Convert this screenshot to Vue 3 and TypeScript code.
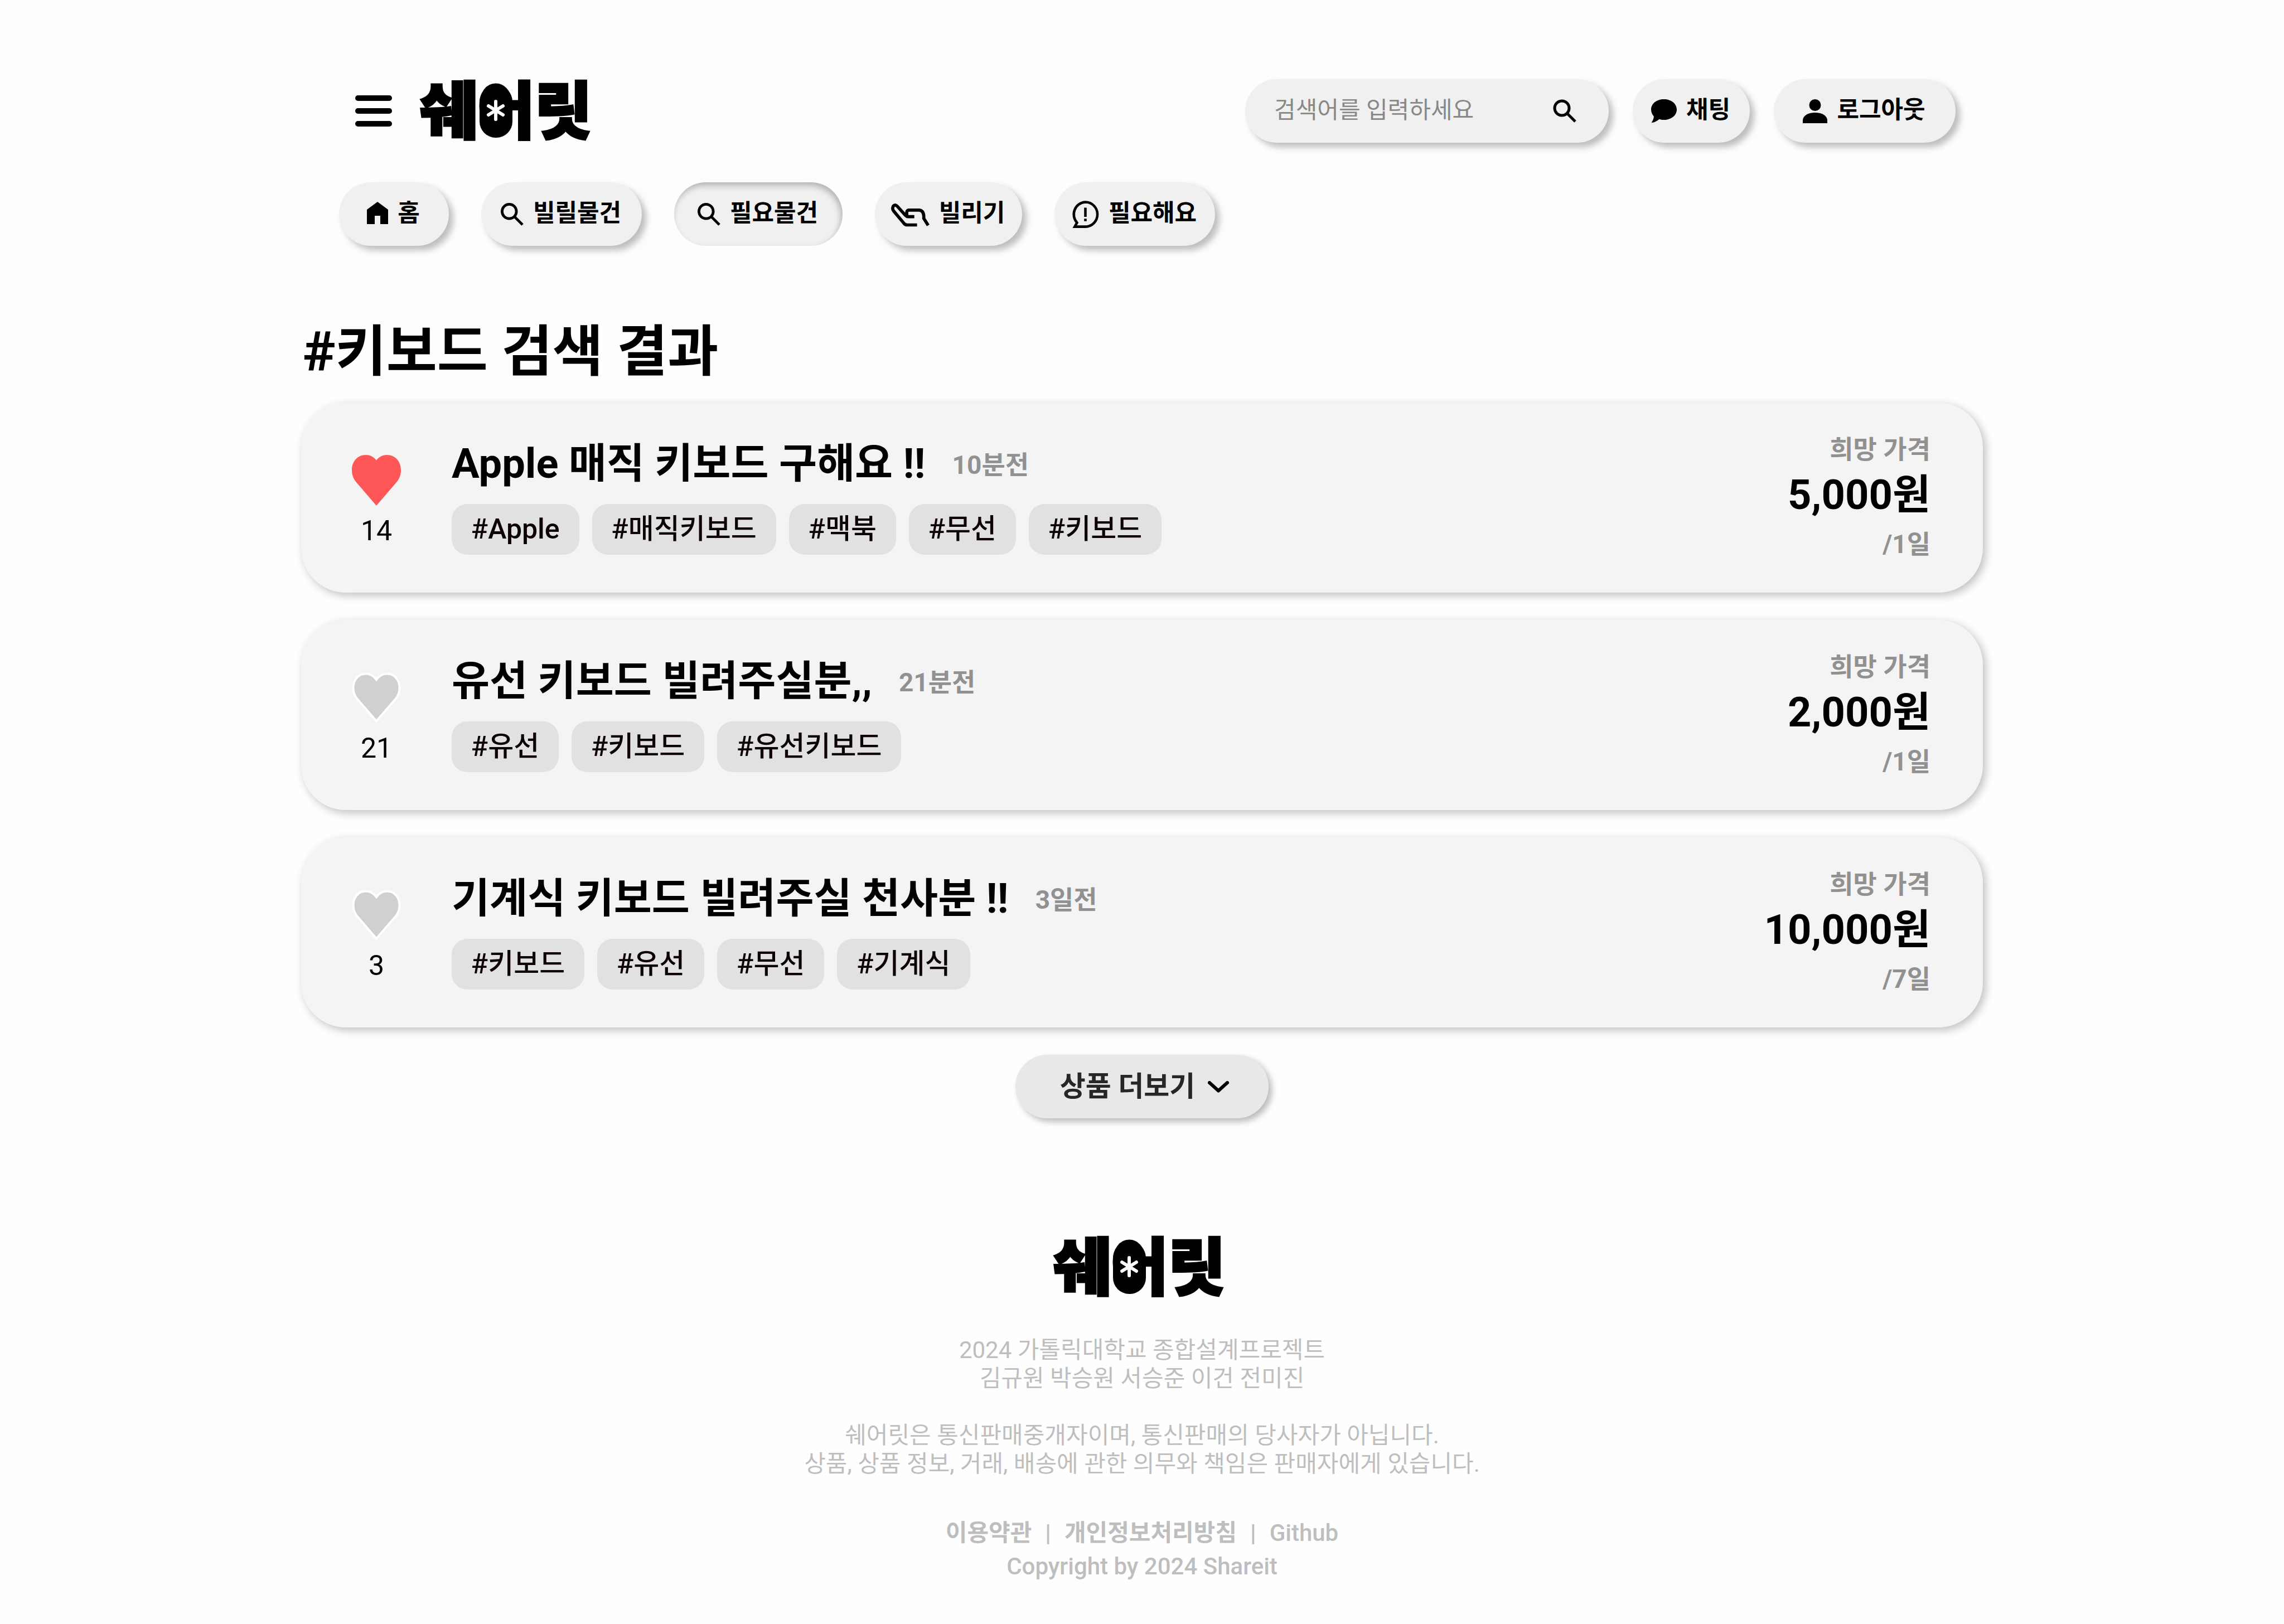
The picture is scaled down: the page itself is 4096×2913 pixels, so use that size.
<script setup lang="ts">
import { ref } from 'vue'

interface NavItem {
  id: string
  label: string
  icon: 'home' | 'search' | 'hand' | 'notice'
}

interface Post {
  id: number
  title: string
  time: string
  tags: string[]
  likes: number
  liked: boolean
  price: string
  period: string
}

const navItems: NavItem[] = [
  { id: 'home', label: '홈', icon: 'home' },
  { id: 'lend', label: '빌릴물건', icon: 'search' },
  { id: 'need', label: '필요물건', icon: 'search' },
  { id: 'borrow', label: '빌리기', icon: 'hand' },
  { id: 'request', label: '필요해요', icon: 'notice' },
]

const activeNav = ref('need')
const keyword = ref('')

const posts = ref<Post[]>([
  {
    id: 1,
    title: 'Apple 매직 키보드 구해요 !!',
    time: '10분전',
    tags: ['Apple', '매직키보드', '맥북', '무선', '키보드'],
    likes: 14,
    liked: true,
    price: '5,000원',
    period: '/1일',
  },
  {
    id: 2,
    title: '유선 키보드 빌려주실분,,',
    time: '21분전',
    tags: ['유선', '키보드', '유선키보드'],
    likes: 21,
    liked: false,
    price: '2,000원',
    period: '/1일',
  },
  {
    id: 3,
    title: '기계식 키보드 빌려주실 천사분 !!',
    time: '3일전',
    tags: ['키보드', '유선', '무선', '기계식'],
    likes: 3,
    liked: false,
    price: '10,000원',
    period: '/7일',
  },
])

function toggleLike(post: Post) {
  post.likes += post.liked ? -1 : 1
  post.liked = !post.liked
}
</script>

<template>
  <div class="page">
    <header class="header">
      <div class="container header-inner">
        <div class="top-row">
          <button class="menu" type="button" aria-label="메뉴">
            <span></span><span></span><span></span>
          </button>
          <a class="logo" href="#" aria-label="쉐어릿">
            <svg class="logo-art" viewBox="0 0 306 98">
              <text class="logo-text" x="0" y="90">쉐어릿</text>
              <rect x="107" y="3" width="59" height="94" rx="29" />
              <path class="spark" d="M136 32V64M123 40L149 56M149 40L123 56" />
            </svg>
          </a>
          <form class="search" role="search" @submit.prevent>
            <input v-model="keyword" type="text" aria-label="검색어" placeholder="검색어를 입력하세요" />
            <button class="search-go" type="submit" aria-label="검색">
              <svg viewBox="0 0 43 43"><circle cx="16" cy="16" r="13" /><path d="M25 25L40 40" /></svg>
            </button>
          </form>
          <button class="pill chat" type="button">
            <svg class="solid" width="46" height="42" viewBox="0 0 46 42">
              <path d="M23 0C36 0 46 8 46 18.500C46 29 36 37 23 37C20 37 17 36.600 14.500 35.800C11 39 6 42 0.500 42C3 39 4.500 35 5 31C2 27.500 0 23.500 0 18.500C0 8 10 0 23 0Z" />
            </svg>
            <span>채팅</span>
          </button>
          <button class="pill logout" type="button">
            <svg class="solid" width="44" height="43" viewBox="0 0 44 43">
              <circle cx="22" cy="10.500" r="10.500" />
              <path d="M0 43V38C0 30 9 24 22 24C35 24 44 30 44 38V43Z" />
            </svg>
            <span>로그아웃</span>
          </button>
        </div>
        <nav class="nav-row">
          <button
            v-for="item in navItems"
            :key="item.id"
            type="button"
            class="pill"
            :class="[item.id, { active: item.id === activeNav }]"
            @click="activeNav = item.id"
          >
            <svg v-if="item.icon === 'home'" class="solid" width="38" height="44" viewBox="0 0 38 44">
              <path d="M19 0L38 14V40H24V25H14V40H0V14Z" />
            </svg>
            <svg v-else-if="item.icon === 'search'" class="line" width="41" height="41" viewBox="0 0 43 43">
              <circle cx="16" cy="16" r="13.500" />
              <path d="M25 25L41 41" />
            </svg>
            <svg v-else-if="item.icon === 'hand'" class="hand" width="69" height="42" viewBox="32 40 280 170">
              <path d="M221 204H150Q136 204 127 194L52 104Q38 87 48 67Q61 52 76 67L136 134Q145 144 155 144H201" />
              <path d="M147 134Q140 96 163 96H235Q267 98 270 138V156L302 207" />
            </svg>
            <svg v-else class="notice" width="49" height="49" viewBox="1349 23 200 205">
              <path d="M1449 33.500A90 92 0 0 1 1449 218H1369L1386 188A90 92 0 0 1 1449 33.500Z" />
              <path d="M1449 75V144M1449 158V177" />
            </svg>
            <span>{{ item.label }}</span>
          </button>
        </nav>
      </div>
    </header>

    <main class="container">
      <h1>#키보드 검색 결과</h1>
      <ul class="posts">
        <li v-for="post in posts" :key="post.id" class="card">
          <button class="like" :class="{ liked: post.liked }" type="button" :aria-pressed="post.liked" @click="toggleLike(post)">
            <svg viewBox="0 0 88 91">
              <path v-if="post.liked" d="M44 9.500C39 3 32 0 25 0C11 0 0 11 0 27C0 36 3 43 7.500 48.500L44 91L80.500 48.500C85 43 88 36 88 27C88 11 77 0 63 0C56 0 49 3 44 9.500Z" />
              <path v-else d="M44 13C39 6 32 2.500 25 2.500C12 2.500 2.500 13 2.500 28C2.500 36 5 42 9 47L44 87.500L79 47C83 42 85.500 36 85.500 28C85.500 13 76 2.500 63 2.500C56 2.500 49 6 44 13Z" />
            </svg>
            <span>{{ post.likes }}</span>
          </button>
          <div class="body">
            <div class="headline">
              <h2>{{ post.title }}</h2>
              <time>{{ post.time }}</time>
            </div>
            <ul class="tags">
              <li v-for="tag in post.tags" :key="tag">#{{ tag }}</li>
            </ul>
          </div>
          <div class="price">
            <span class="muted">희망 가격</span>
            <strong>{{ post.price }}</strong>
            <span class="muted">{{ post.period }}</span>
          </div>
        </li>
      </ul>
      <button class="more" type="button">
        <span>상품 더보기</span>
        <svg width="38" height="21" viewBox="0 0 38 21"><path d="M3 3L19 17.500L35 3" /></svg>
      </button>
    </main>

    <footer class="footer">
      <a class="logo footer-logo" href="#" aria-label="쉐어릿">
        <svg class="logo-art" viewBox="0 0 306 98">
          <text class="logo-text" x="0" y="90">쉐어릿</text>
          <rect x="107" y="3" width="59" height="94" rx="29" />
          <path class="spark" d="M136 32V64M123 40L149 56M149 40L123 56" />
        </svg>
      </a>
      <p>2024 가톨릭대학교 종합설계프로젝트<br />김규원 박승원 서승준 이건 전미진</p>
      <p class="notice-text">
        쉐어릿은 통신판매중개자이며, 통신판매의 당사자가 아닙니다.<br />상품, 상품 정보, 거래, 배송에 관한 의무와 책임은 판매자에게 있습니다.
      </p>
      <div class="links">
        <a href="#">이용약관</a>
        <span>|</span>
        <a href="#">개인정보처리방침</a>
        <span>|</span>
        <a href="#" class="latin">Github</a>
      </div>
      <small>Copyright by 2024 Shareit</small>
    </footer>
  </div>
</template>

<style>
body {
  margin: 0;
  background: #fefefe;
}
</style>

<style scoped>
.page {
  font-family: Roboto, 'Noto Sans CJK KR', sans-serif;
  color: #000;
}

.page * {
  box-sizing: border-box;
}

button,
input {
  margin: 0;
  padding: 0;
  border: 0;
  background: none;
  color: inherit;
  font: inherit;
}

svg {
  display: block;
  flex: none;
}

ul {
  margin: 0;
  padding: 0;
  list-style: none;
}

a {
  color: inherit;
  text-decoration: none;
}

.container {
  width: 100%;
  max-width: 3016px;
  margin: 0 auto;
}

.header {
  background: #fdfdfd;
}

.header-inner {
  display: flex;
  flex-direction: column;
  gap: 71px;
  padding: 142px 49px 43px 68px;
}

.top-row,
.nav-row {
  display: flex;
  align-items: center;
}

.nav-row {
  gap: 58px;
}

.menu {
  display: flex;
  flex-direction: column;
  gap: 13px;
  width: 66px;
  margin: 0 50px 0 29px;
}

.menu span {
  height: 10px;
  border-radius: 5px;
  background: #000;
}

.logo {
  display: block;
}

.logo-art {
  width: 306px;
  height: 98px;
  overflow: visible;
}

.logo-text {
  font-size: 112px;
  font-weight: 900;
  stroke: #000;
  stroke-width: 4;
}

.spark {
  fill: none;
  stroke: #fff;
  stroke-width: 6;
  stroke-linecap: round;
}

.search,
.pill {
  display: flex;
  align-items: center;
  height: 114px;
  border-radius: 57px;
  background: #f0f0f0;
  box-shadow: 8px 8px 12px rgba(0, 0, 0, 0.25);
}

.search {
  width: 652px;
  margin-left: auto;
  padding: 0 57px 0 52px;
}

.search input {
  flex: 1;
  min-width: 0;
  height: 100px;
  padding-bottom: 4px;
  outline: none;
  font-size: 42px;
  font-weight: 400;
}

.search input::placeholder {
  color: #888;
  opacity: 1;
}

.search-go svg {
  width: 43px;
  height: 43px;
}

.search-go svg,
.line {
  fill: none;
  stroke: #000;
  stroke-width: 5;
}

.pill {
  justify-content: center;
  gap: 17px;
  padding-right: 2px;
  font-size: 43px;
  font-weight: 700;
  line-height: 60px;
  white-space: nowrap;
}

.pill span {
  padding-bottom: 4px;
}

.pill.active {
  box-shadow: inset -3px 6px 11px rgba(0, 0, 0, 0.25);
}

.chat {
  width: 210px;
  margin: 0 43px;
}

.logout {
  width: 326px;
}

.home {
  width: 197px;
}

.lend,
.request {
  width: 288px;
}

.need {
  width: 302px;
}

.borrow {
  width: 264px;
}

.hand {
  overflow: visible;
  fill: none;
  stroke: #000;
  stroke-width: 23;
}

.notice {
  fill: none;
  stroke: #000;
  stroke-width: 19;
}

h1 {
  margin: 87px 0 31px 3px;
  font-size: 99px;
  font-weight: 700;
  line-height: 120px;
}

.posts {
  display: flex;
  flex-direction: column;
  gap: 49px;
}

.card {
  display: flex;
  align-items: flex-start;
  padding-right: 94px;
  border-radius: 80px;
  background: #f4f4f4;
  box-shadow: 5px 5px 16px rgba(0, 0, 0, 0.25);
}

.like {
  display: flex;
  flex-direction: column;
  align-items: center;
  gap: 16px;
  width: 270px;
  padding-top: 94px;
  font-size: 50px;
  font-weight: 400;
  line-height: 58px;
}

.like svg {
  width: 88px;
  height: 91px;
  overflow: visible;
  fill: #d0d0d0;
  stroke: #fff;
  stroke-width: 4;
}

.like.liked svg {
  fill: #ff5757;
  stroke: none;
}

.body {
  flex: 1;
  padding: 62px 0 68px;
}

.headline {
  display: flex;
  align-items: center;
  gap: 48px;
}

h2 {
  margin: 0;
  font-size: 74px;
  font-weight: 700;
  line-height: 96px;
}

time,
.muted {
  color: #919191;
  font-size: 46px;
  font-weight: 700;
  line-height: 60px;
}

time {
  padding-top: 4px;
}

.tags {
  display: flex;
  flex-wrap: wrap;
  gap: 23px;
  margin-top: 24px;
}

.tags li {
  padding: 0 35px;
  border-radius: 28px;
  background: #e1e1e1;
  color: #0d0305;
  font-size: 50px;
  font-weight: 500;
  line-height: 91px;
}

.price {
  display: flex;
  flex-direction: column;
  align-items: flex-end;
  padding-top: 54px;
}

.price strong {
  margin: 3px 0 9px;
  font-size: 74px;
  font-weight: 700;
  line-height: 98px;
}

.more {
  display: flex;
  align-items: center;
  gap: 23px;
  height: 114px;
  margin: 49px auto 0;
  padding: 0 71px 0 80px;
  border-radius: 57px;
  background: #e8e8e8;
  box-shadow: 6px 6px 12px rgba(0, 0, 0, 0.27);
  color: #272727;
  font-size: 50px;
  font-weight: 700;
  line-height: 60px;
}

.more svg {
  fill: none;
  stroke: #000;
  stroke-width: 6;
  stroke-linecap: round;
  stroke-linejoin: round;
}

.footer {
  display: flex;
  flex-direction: column;
  align-items: center;
  margin-top: 218px;
  padding-bottom: 72px;
  color: #bebebe;
  font-size: 42px;
  text-align: center;
}

.footer-logo {
  margin-bottom: 74px;
  padding-right: 12px;
}

.footer p {
  margin: 0;
  font-weight: 400;
  line-height: 51px;
}

.footer .notice-text {
  margin-top: 51px;
}

.links {
  display: flex;
  gap: 24px;
  margin-top: 69px;
  font-weight: 700;
  line-height: 60px;
}

.links .latin,
.footer small {
  font-size: 42px;
  font-weight: 500;
  line-height: 60px;
}
</style>
